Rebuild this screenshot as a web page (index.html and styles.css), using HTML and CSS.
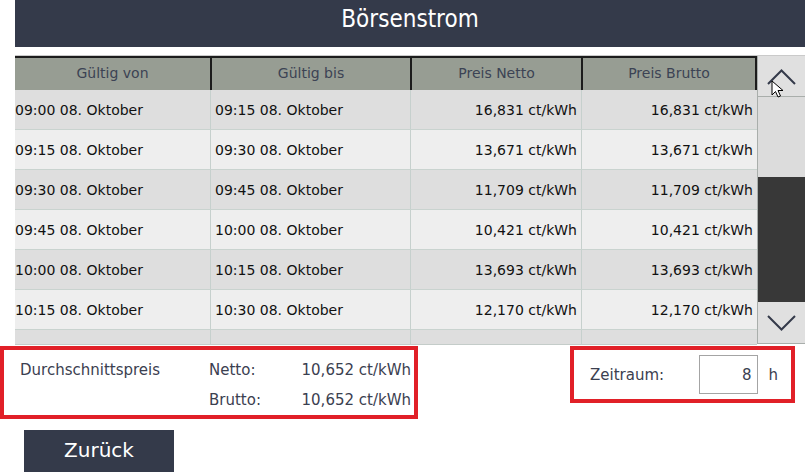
FILE: index.html
```html
<!DOCTYPE html>
<html lang="de">
<head>
<meta charset="utf-8">
<title>Börsenstrom</title>
<link rel="stylesheet" href="styles.css">
</head>
<body>
<div class="page">
  <header class="topbar"><h1 class="title">Börsenstrom</h1></header>

  <section class="grid-wrap">
    <div class="grid">
      <div class="row head">
        <div class="cell c1">Gültig von</div>
        <div class="cell c2">Gültig bis</div>
        <div class="cell c3">Preis Netto</div>
        <div class="cell c4">Preis Brutto</div>
      </div>
      <div class="body">
        <div class="row odd">
          <div class="cell c1">09:00 08. Oktober</div>
          <div class="cell c2">09:15 08. Oktober</div>
          <div class="cell c3">16,831 ct/kWh</div>
          <div class="cell c4">16,831 ct/kWh</div>
        </div>
        <div class="row even">
          <div class="cell c1">09:15 08. Oktober</div>
          <div class="cell c2">09:30 08. Oktober</div>
          <div class="cell c3">13,671 ct/kWh</div>
          <div class="cell c4">13,671 ct/kWh</div>
        </div>
        <div class="row odd">
          <div class="cell c1">09:30 08. Oktober</div>
          <div class="cell c2">09:45 08. Oktober</div>
          <div class="cell c3">11,709 ct/kWh</div>
          <div class="cell c4">11,709 ct/kWh</div>
        </div>
        <div class="row even">
          <div class="cell c1">09:45 08. Oktober</div>
          <div class="cell c2">10:00 08. Oktober</div>
          <div class="cell c3">10,421 ct/kWh</div>
          <div class="cell c4">10,421 ct/kWh</div>
        </div>
        <div class="row odd">
          <div class="cell c1">10:00 08. Oktober</div>
          <div class="cell c2">10:15 08. Oktober</div>
          <div class="cell c3">13,693 ct/kWh</div>
          <div class="cell c4">13,693 ct/kWh</div>
        </div>
        <div class="row even">
          <div class="cell c1">10:15 08. Oktober</div>
          <div class="cell c2">10:30 08. Oktober</div>
          <div class="cell c3">12,170 ct/kWh</div>
          <div class="cell c4">12,170 ct/kWh</div>
        </div>
        <div class="row odd">
          <div class="cell c1"></div>
          <div class="cell c2"></div>
          <div class="cell c3"></div>
          <div class="cell c4"></div>
        </div>
      </div>
    </div>

    <div class="scrollbar">
      <div class="sb-btn sb-up">
        <svg width="48" height="40" viewBox="0 0 48 40"><path d="M11 28 L24.5 14.5 L38 28" fill="none" stroke="#343a4a" stroke-width="2"/></svg>
      </div>
      <div class="sb-track">
        <div class="sb-space"></div>
        <div class="sb-thumb"></div>
      </div>
      <div class="sb-btn sb-down">
        <svg width="48" height="40" viewBox="0 0 48 40"><path d="M11 13 L24.5 26.5 L38 13" fill="none" stroke="#343a4a" stroke-width="2"/></svg>
      </div>
    </div>

    <svg class="cursor" width="16" height="20" viewBox="0 0 16 20"><path d="M1 1 L1 15 L4.5 11.5 L7 17 L9.5 16 L7 10.5 L12 10.5 Z" fill="#fff" stroke="#000" stroke-width="1"/></svg>
  </section>

  <section class="summary">
    <div class="box avg">
      <div class="avg-label">Durchschnittspreis</div>
      <div class="avg-key">Netto:</div>
      <div class="avg-val">10,652 ct/kWh</div>
      <div class="avg-label"></div>
      <div class="avg-key">Brutto:</div>
      <div class="avg-val">10,652 ct/kWh</div>
    </div>
    <div class="box period">
      <span class="period-label">Zeitraum:</span>
      <span class="period-input">8</span>
      <span class="period-unit">h</span>
    </div>
  </section>

  <button class="back">Zurück</button>
</div>
</body>
</html>
```

FILE: styles.css
```css
* { box-sizing: border-box; }

html, body {
  margin: 0;
  padding: 0;
  background: #ffffff;
}

body {
  font-family: "DejaVu Sans", "Liberation Sans", sans-serif;
  font-size: 14px;
  color: #111111;
}

.page {
  width: 805px;
  height: 472px;
  overflow: hidden;
  position: relative;
}

.topbar {
  margin-left: 15px;
  height: 47px;
  background: #343a4a;
  display: flex;
  align-items: center;
  justify-content: center;
}

.title {
  margin: 0 0 9px 0;
  font-family: "DejaVu Sans Condensed", "DejaVu Sans", sans-serif;
  font-stretch: condensed;
  font-weight: normal;
  font-size: 24px;
  color: #ffffff;
}

.grid-wrap {
  position: relative;
  margin-top: 8px;
  margin-left: 15px;
  border-top: 1px solid #cacaca;
  display: flex;
  height: 290px;
}

.grid {
  width: 742px;
  height: 289px;
  overflow: hidden;
  border-bottom: 1px solid #c4ccc9;
}

.row {
  display: grid;
  grid-template-columns: 195px 200px 171px 176px;
}

.head {
  height: 34px;
  background: #979d93;
  border-top: 2px solid #1c1c1c;
  color: #3c4354;
}

.head .cell {
  display: flex;
  align-items: center;
  justify-content: center;
  padding-bottom: 2px;
}

.head .c2, .head .c3, .head .c4 { border-left: 2px solid #1c1c1c; }
.head .c4 { border-right: 2px solid #1c1c1c; }

.body .row {
  height: 40px;
  border-bottom: 1px solid #c9d3cf;
}

.body .row.odd { background: #dedede; }
.body .row.even { background: #eeeeee; }

.body .cell {
  display: flex;
  align-items: center;
  padding: 0 4px;
  white-space: nowrap;
}

.body .c1 { padding-left: 0; }
.body .c2 { border-left: 1px solid #c6d0cd; }
.body .c3 { border-left: 1px solid #c6d0cd; justify-content: flex-end; }
.body .c4 { border-left: 1px solid #c6d0cd; justify-content: flex-end; }

.scrollbar {
  width: 48px;
  height: 288px;
  border-left: 1px solid #a9aeab;
  border-bottom: 1px solid #a9aeab;
  background: #dedede;
  display: flex;
  flex-direction: column;
}

.sb-btn {
  height: 41px;
  background: #e0e0e0;
  display: flex;
  align-items: center;
  justify-content: center;
}

.sb-btn svg { display: block; margin-left: -1px; }

.sb-up { border-bottom: 1px solid #a9aeab; }

.sb-track {
  flex: 1;
  display: flex;
  flex-direction: column;
}

.sb-space { height: 80px; background: #dcdcdc; }
.sb-thumb { flex: 1; background: #383838; }

.cursor {
  position: absolute;
  left: 756px;
  top: 24px;
}

.summary {
  display: flex;
  justify-content: space-between;
  align-items: flex-start;
  margin-top: 1px;
  padding-right: 10px;
}

.box {
  border: 4px solid #e12028;
  color: #3b4050;
  font-size: 15px;
}

.avg {
  width: 418px;
  height: 73px;
  padding: 5px 3px 0 16px;
  display: grid;
  grid-template-columns: 189px 84px 1fr;
  grid-auto-rows: 30px;
  align-items: center;
}

.avg-val { text-align: right; }

.period {
  width: 225px;
  height: 57px;
  padding: 0 13px 0 16px;
  display: flex;
  align-items: center;
}

.period-label { width: 109px; }

.period-input {
  width: 60px;
  height: 39px;
  border: 1px solid #a4a4a4;
  display: flex;
  align-items: center;
  justify-content: flex-end;
  padding-right: 6px;
  background: #ffffff;
}

.period-unit { margin-left: 10px; }

.back {
  display: block;
  margin: 11px 0 0 24px;
  width: 150px;
  height: 42px;
  border: 0;
  background: #343a4a;
  color: #ffffff;
  font-family: "DejaVu Sans", sans-serif;
  font-size: 20px;
  padding: 0 0 2px 0;
}
```
